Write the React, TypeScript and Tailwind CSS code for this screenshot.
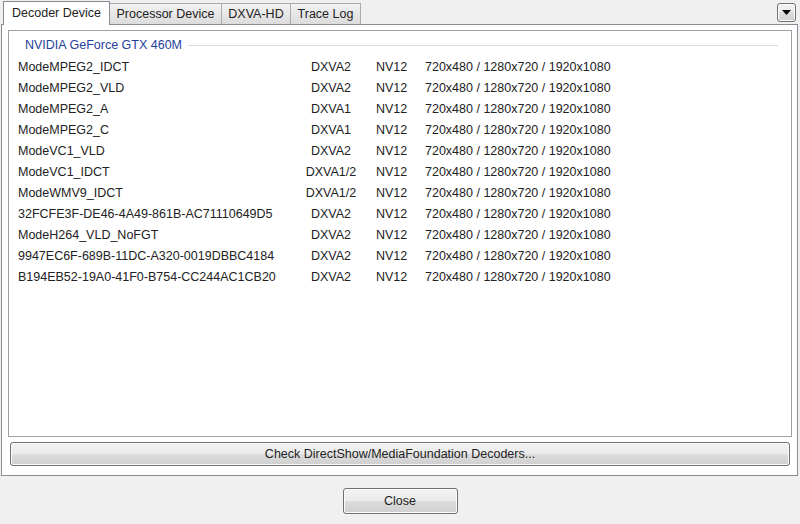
const rows: [string, string][] = [
  ["ModeMPEG2_IDCT", "DXVA2"],
  ["ModeMPEG2_VLD", "DXVA2"],
  ["ModeMPEG2_A", "DXVA1"],
  ["ModeMPEG2_C", "DXVA1"],
  ["ModeVC1_VLD", "DXVA2"],
  ["ModeVC1_IDCT", "DXVA1/2"],
  ["ModeWMV9_IDCT", "DXVA1/2"],
  ["32FCFE3F-DE46-4A49-861B-AC71110649D5", "DXVA2"],
  ["ModeH264_VLD_NoFGT", "DXVA2"],
  ["9947EC6F-689B-11DC-A320-0019DBBC4184", "DXVA2"],
  ["B194EB52-19A0-41F0-B754-CC244AC1CB20", "DXVA2"],
];

const btn =
  "border border-[#707070] rounded-[3px] bg-[linear-gradient(to_bottom,#f2f2f2_0%,#ebebeb_50%,#dddddd_50%,#cfcfcf_100%)] shadow-[inset_0_0_0_1px_#fcfcfc]";

export default function App() {
  return (
    <div className="w-[800px] h-[524px] bg-[#f0f0f0] flex flex-col font-['Liberation_Sans',Arial,sans-serif] text-[12.5px] text-[#222] overflow-hidden">
      {/* tab strip */}
      <div className="h-[24px] flex items-end pl-[3px] relative z-10">
        <div className="w-[107px] h-[24px] -mb-px bg-white border border-b-0 border-[#898c95] flex items-center justify-center pb-[1px]">
          Decoder Device
        </div>
        <div className="w-[112px] h-[21px] border border-l-0 border-b-0 border-[#acacac] bg-[linear-gradient(to_bottom,#f2f2f2,#dcdcdc)] flex items-center justify-center">
          Processor Device
        </div>
        <div className="w-[69px] h-[21px] border border-l-0 border-b-0 border-[#acacac] bg-[linear-gradient(to_bottom,#f2f2f2,#dcdcdc)] flex items-center justify-center">
          DXVA-HD
        </div>
        <div className="w-[70px] h-[21px] border border-l-0 border-b-0 border-[#acacac] bg-[linear-gradient(to_bottom,#f2f2f2,#dcdcdc)] flex items-center justify-center">
          Trace Log
        </div>
        <div className={`ml-auto mr-[4px] self-start mt-[3px] w-[19px] h-[19px] flex items-center justify-center ${btn}`}>
          <svg width="9" height="5" viewBox="0 0 9 5">
            <path d="M0 0h9L4.5 5z" fill="#000" />
          </svg>
        </div>
      </div>

      {/* tab panel */}
      <div className="ml-[1px] w-[797px] h-[452px] bg-white border border-[#898c95] flex flex-col pt-[5px] pl-[6px] pr-[5px]">
        <div className="h-[407px] border border-[#a0a0a0] pt-[3px] pl-[9px]">
          <div className="h-[23px] flex items-center pl-[7px] pr-[13px]">
            <span className="text-[#1f3f9b]">NVIDIA GeForce GTX 460M</span>
            <div className="flex-1 h-px bg-[#d5dde3] ml-[6px]" />
          </div>
          {rows.map(([name, type]) => (
            <div key={name} className="h-[21px] flex items-center whitespace-nowrap">
              <span className="w-[282px]">{name}</span>
              <span className="w-[62px] text-center">{type}</span>
              <span className="w-[63px] pl-[14px]">NV12</span>
              <span>720x480 / 1280x720 / 1920x1080</span>
            </div>
          ))}
        </div>
        <div className={`mt-[5px] mx-[2px] h-[24px] flex items-center justify-center ${btn}`}>
          Check DirectShow/MediaFoundation Decoders...
        </div>
      </div>

      {/* footer */}
      <div className="flex justify-center mt-[12px]">
        <div className={`w-[115px] h-[26px] flex items-center justify-center ${btn}`}>Close</div>
      </div>
    </div>
  );
}
